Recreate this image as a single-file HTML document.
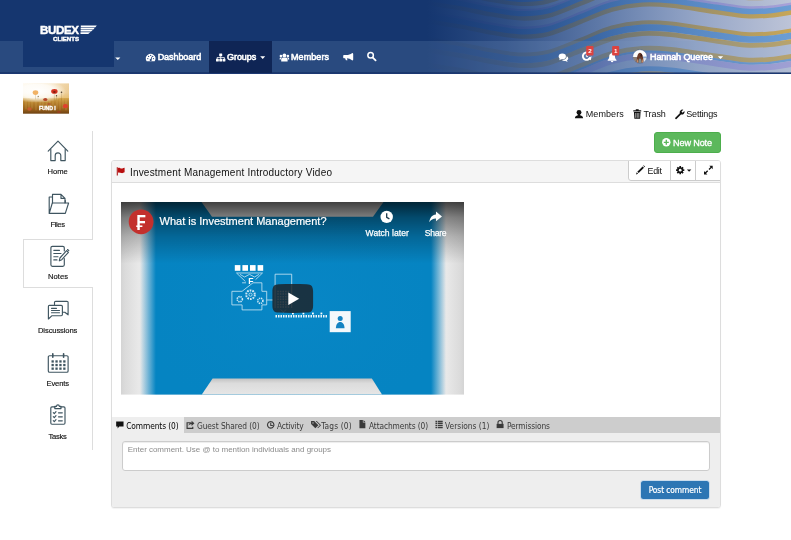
<!DOCTYPE html>
<html lang="en">
<head>
<meta charset="utf-8">
<title>Investment Management Introductory Video</title>
<style>
*{box-sizing:border-box;margin:0;padding:0}
html,body{width:791px;height:540px;overflow:hidden;background:#fff}
body{font-family:"Liberation Sans",sans-serif;color:#111;position:relative;font-size:9px}
#hdr{position:absolute;left:0;top:0;width:791px;height:74px;background:#15366f;overflow:hidden}
#hdr svg.bg{position:absolute;left:0;top:0}
#navband{position:absolute;left:0;top:41px;width:791px;height:32px;background:rgba(126,154,196,.2)}
#hdrline{position:absolute;left:0;top:72px;width:791px;height:2px;background:linear-gradient(rgba(15,40,92,.5) 0,rgba(15,40,92,.5) 50%,#1c3872 50%,#1c3872 100%)}
#logo{position:absolute;left:23px;top:0;width:91px;height:67px;background:#15366f}
#navact{position:absolute;left:209px;top:41px;width:63px;height:32px;background:#0f2555}
#wrap{position:absolute;left:0;top:0;width:791px;height:540px;will-change:transform}
.t{position:absolute;white-space:nowrap;display:block}
.ic{position:absolute;display:block;overflow:visible}
.box{position:absolute;display:block}
</style>
</head>
<body>
<div id="wrap">
<div id="hdr">
  <svg class="bg" width="791" height="75" viewBox="0 0 791 75">
    <defs>
      <path id="wv" fill="none" d="M395,6C401.0,7.7 420.0,13.5 431,16C442.0,18.5 451.0,19.2 461,21C471.0,22.8 481.0,25.3 491,27C501.0,28.7 511.5,30.8 521,31C530.5,31.2 538.0,31.0 548,28.5C558.0,26.0 570.3,20.1 581,16C591.7,11.9 601.8,6.8 612,4C622.2,1.2 632.2,-0.3 642,-1C651.8,-1.7 658.7,-1.2 671,0C683.3,1.2 703.7,4.8 716,6.5C728.3,8.2 736.0,9.9 745,10.5C754.0,11.1 760.8,10.8 770,10C779.2,9.2 795.0,6.2 800,5.5"/>
      <filter id="wb" x="0" y="0" width="100%" height="100%" filterUnits="userSpaceOnUse"><feGaussianBlur stdDeviation=".55"/></filter>
      <linearGradient id="fade" gradientUnits="userSpaceOnUse" x1="0" x2="791" y1="0" y2="0">
        <stop offset="0" stop-color="#15366f"/>
        <stop offset="0.54" stop-color="#15366f"/>
        <stop offset="0.64" stop-color="#173b77" stop-opacity=".87"/>
        <stop offset="0.76" stop-color="#1b4486" stop-opacity=".6"/>
        <stop offset="0.88" stop-color="#234f96" stop-opacity=".3"/>
        <stop offset="1" stop-color="#234f96" stop-opacity=".05"/>
      </linearGradient>
    </defs>
    <rect x="380" width="411" height="75" fill="#c5cadb"/>
    <g filter="url(#wb)">
<use href="#wv" y="-71" stroke="#d0ab55" stroke-width="3.5"/>
<use href="#wv" y="-67" stroke="#70a2d8" stroke-width="6"/>
<use href="#wv" y="-52" stroke="#70a2d8" stroke-width="6"/>
<use href="#wv" y="-48" stroke="#d0ab55" stroke-width="4"/>
<use href="#wv" y="-36" stroke="#d0ab55" stroke-width="4"/>
<use href="#wv" y="-31.5" stroke="#70a2d8" stroke-width="6"/>
<use href="#wv" y="-27" stroke="#d0ab55" stroke-width="4"/>
<use href="#wv" y="-21" stroke="#b0a6dc" stroke-width="2"/>
<use href="#wv" y="-17" stroke="#70a2d8" stroke-width="6"/>
<use href="#wv" y="-12.6" stroke="#d0ab55" stroke-width="4.4"/>
<use href="#wv" y="-3" stroke="#b0a6dc" stroke-width="3"/>
<use href="#wv" y="1.2" stroke="#70a2d8" stroke-width="6.4"/>
<use href="#wv" y="5.6" stroke="#d0ab55" stroke-width="4.4"/>
<use href="#wv" y="23.6" stroke="#d0ab55" stroke-width="4.2"/>
<use href="#wv" y="28.8" stroke="#70a2d8" stroke-width="6.6"/>
<use href="#wv" y="34.6" stroke="#d0ab55" stroke-width="4.8"/>
<use href="#wv" y="49.5" stroke="#d0ab55" stroke-width="5"/>
<use href="#wv" y="52.8" stroke="#70a2d8" stroke-width="2.2"/>
<use href="#wv" y="57" stroke="#b0a6dc" stroke-width="6"/>
<use href="#wv" y="70" stroke="#70a2d8" stroke-width="5"/>
<use href="#wv" y="74" stroke="#d0ab55" stroke-width="3"/>
<use href="#wv" y="88" stroke="#d0ab55" stroke-width="3"/>
<use href="#wv" y="92" stroke="#70a2d8" stroke-width="6"/>
    </g>
    <rect width="791" height="75" fill="url(#fade)"/>
  </svg>
  <div id="navband"></div>
  <div id="hdrline"></div>
  <div id="logo"></div>
  <div id="navact"></div>
<svg class="ic" style="left:0;top:0" width="791" height="75" viewBox="0 0 791 75">
  <!-- logo wing -->
  <g fill="#fff">
    <polygon points="80.800,25.500 96.800,25.500 95.400,27.200 80.800,27.200"/>
    <polygon points="80.700,27.800 94.800,27.800 93.300,29.400 80.700,29.400"/>
    <polygon points="80.600,30 92.700,30 91,31.600 80.600,31.600"/>
    <polygon points="80.500,32.200 90.300,32.200 88.200,33.900 80.500,33.900"/>
  </g>
  <!-- caret by logo -->
  <polygon points="115.200,57.400 120.400,57.400 117.800,60.100" fill="#fff"/>
  <!-- dashboard (tachometer) -->
  <g>
    <path d="M146.6,61.2 A4.75,4.75 0 1 1 154.7,61.2 Z" fill="#fff"/>
    <g fill="#2a4a80">
      <circle cx="147.8" cy="58.6" r=".65"/><circle cx="148.6" cy="56.4" r=".65"/><circle cx="150.65" cy="55.4" r=".65"/><circle cx="152.7" cy="56.4" r=".65"/><circle cx="153.5" cy="58.6" r=".65"/>
      <path d="M150.1,60.6 L151.6,56.6 L152.2,56.9 L151.2,60.9 Z"/>
      <circle cx="150.65" cy="60.1" r="1"/>
    </g>
  </g>
  <!-- groups (sitemap) -->
  <g fill="#fff">
    <rect x="219.2" y="53.6" width="3" height="2.6" rx=".3"/>
    <rect x="216" y="58.8" width="2.8" height="2.6" rx=".3"/>
    <rect x="219.3" y="58.8" width="2.8" height="2.6" rx=".3"/>
    <rect x="222.6" y="58.8" width="2.8" height="2.6" rx=".3"/>
    <path d="M220.4,56 h.7 v1.2 h3.6 v1.8 h-.7 v-1.1 h-2.9 v1.1 h-.7 v-1.1 h-2.9 v1.1 h-.7 v-1.8 h3.6 z"/>
  </g>
  <!-- caret groups -->
  <polygon points="260.200,56.300 265.200,56.300 262.700,58.900" fill="#fff"/>
  <!-- members (users) -->
  <g fill="#fff">
    <circle cx="284.4" cy="55.4" r="1.9"/>
    <path d="M281.2,61.4 v-2 a1.9,1.9 0 0 1 1.9,-1.9 h2.6 a1.9,1.9 0 0 1 1.9,1.9 v2 z"/>
    <circle cx="280.9" cy="56" r="1.3"/>
    <path d="M279.6,59.6 v-.9 a1.3,1.3 0 0 1 1.3,-1.2 h1 a2.6,2.6 0 0 0 -1.2,2.1 z"/>
    <circle cx="287.9" cy="56" r="1.3"/>
    <path d="M289.2,59.6 v-.9 a1.3,1.3 0 0 0 -1.3,-1.2 h-1 a2.6,2.6 0 0 1 1.2,2.1 z"/>
  </g>
  <!-- megaphone -->
  <g fill="#fff">
    <path d="M352.3,53 c.5,0 .9,.4 .9,.9 v5.6 c0,.5 -.4,.9 -.9,.9 c-2,-1.5 -3.6,-2.1 -5.4,-2.2 l.6,2.1 h-1.6 l-.8,-2.1 h-.9 c-.6,0 -1,-.4 -1,-1 v-1.1 c0,-.6 .4,-1 1,-1 h2.2 c2.1,0 3.900,-.6 5.900,-2.100 z"/>
  </g>
  <!-- search -->
  <g fill="none" stroke="#fff">
    <circle cx="370.6" cy="55.3" r="2.75" stroke-width="1.5"/>
    <path d="M372.8,57.6 L375.6,60.4" stroke-width="1.8" stroke-linecap="round"/>
  </g>
  <!-- comments -->
  <g fill="#fff">
    <ellipse cx="562.300" cy="56.400" rx="3.600" ry="2.800"/>
    <path d="M559.900,58 L559.300,60.300 L562.200,58.800 Z"/>
    <path d="M566.700,56.200 a3,2.500 0 0 1 .2,4.300 l.8,1.400 l-2.200,-.9 a3.400,2.500 0 0 1 -3.600,-1 a4.500,3.600 0 0 0 4.800,-3.800 z"/>
  </g>
  <!-- history -->
  <g fill="none" stroke="#fff">
    <path d="M588.600,53.100 A3.700,3.700 0 1 0 590.100,57.300" stroke-width="1.900"/>
    <path d="M591.600,56.300 L590.800,60.200 L587.600,58.400 Z" fill="#fff" stroke="none"/>
    <path d="M586.400,54.600 V56.600 H588" stroke-width=".9"/>
  </g>
  <rect x="586.200" y="46" width="7.300" height="9.500" rx="1" fill="#dc4340"/>
  <!-- bell -->
  <g fill="#fff">
    <path d="M612.100,53.300 c2.100,0 2.900,1.600 2.900,3.400 c0,1.500 .5,2.400 1.500,3.200 v.8 h-8.800 v-.8 c1,-.8 1.500,-1.700 1.500,-3.200 c0,-1.800 .8,-3.400 2.900,-3.400 z"/>
    <circle cx="612.100" cy="53.200" r=".7"/>
    <path d="M610.900,61.100 h2.400 a1.200,1.200 0 0 1 -2.400,0 z"/>
  </g>
  <rect x="612.100" y="46" width="7.100" height="9.500" rx="1" fill="#dc4340"/>
  <!-- avatar -->
  <clipPath id="avc"><ellipse cx="639.900" cy="56.500" rx="7.100" ry="6.800"/></clipPath>
  <g clip-path="url(#avc)">
    <rect x="632" y="49" width="16" height="16" fill="#fdfdfd"/>
    <rect x="632" y="57" width="6" height="8" fill="#8d8078"/>
    <rect x="642" y="56.500" width="6" height="2" fill="#8fb0d8"/>
    <rect x="642" y="58.500" width="6" height="6" fill="#dfe6ee"/>
    <path d="M636.800,64 c-.4,-4 .2,-10.800 3,-11.200 c3,.2 4,6.500 3.600,11.200 z" fill="#6b3b2a"/>
    <path d="M638.300,64 c0,-3.500 .4,-5.500 1.600,-5.500 c1.300,0 1.800,2 1.800,5.500 z" fill="#7f8e92"/>
    <path d="M636.600,64 c.1,-2.500 .5,-4.500 1.400,-5.200 l.3,5.200 z M643.300,64 c-.1,-2.500 -.5,-4.500 -1.400,-5.200 l-.3,5.200 z" fill="#c98c66"/>
    <ellipse cx="641.300" cy="55.200" rx=".9" ry="1.500" fill="#3a1f1a"/>
  </g>
  <ellipse cx="639.900" cy="56.500" rx="7.100" ry="6.800" fill="none" stroke="#2c4f8f" stroke-width=".6" opacity=".6"/>
  <!-- caret user -->
  <polygon points="717.800,56.200 723.200,56.200 720.500,59" fill="#fff"/>
</svg>

<span class="t" style="left:39.9px;top:22.08px;font-size:11.6px;line-height:16px;color:#fff;letter-spacing:-0.373px;font-weight:bold;-webkit-text-stroke:.45px #fff;">BUDEX</span>
<span class="t" style="left:53.1px;top:33.69px;font-size:6.1px;line-height:9px;color:#fff;letter-spacing:-0.030px;font-weight:bold;-webkit-text-stroke:.4px #fff;">CLIENTS</span>
<span class="t" style="left:157.7px;top:50.98px;font-size:9.0px;line-height:13px;color:#fff;letter-spacing:-0.066px;-webkit-text-stroke:.55px #fff;">Dashboard</span>
<span class="t" style="left:227.1px;top:50.98px;font-size:9.0px;line-height:13px;color:#fff;letter-spacing:-0.083px;-webkit-text-stroke:.55px #fff;">Groups</span>
<span class="t" style="left:291.0px;top:50.98px;font-size:9.0px;line-height:13px;color:#fff;letter-spacing:0.081px;-webkit-text-stroke:.55px #fff;">Members</span>
<span class="t" style="left:650.0px;top:50.88px;font-size:9.0px;line-height:13px;color:#fff;letter-spacing:-0.087px;-webkit-text-stroke:.55px #fff;">Hannah Queree</span>
<span class="t" style="left:588.3px;top:46.25px;font-size:6.2px;line-height:9px;color:#fff;letter-spacing:0.047px;font-weight:bold;">2</span>
<span class="t" style="left:613.9px;top:46.25px;font-size:6.2px;line-height:9px;color:#fff;letter-spacing:-0.253px;font-weight:bold;">1</span>
</div>
<!-- fund thumbnail -->
<svg class="ic" style="left:23px;top:83px" width="46" height="30.800" viewBox="0 -0.400 46 30.800">
  <defs>
    <linearGradient id="th1" x1="0" x2="0" y1="0" y2="1">
      <stop offset="0" stop-color="#fdf6e6"/><stop offset=".3" stop-color="#fbedd0"/><stop offset=".47" stop-color="#f1d79a"/><stop offset=".5" stop-color="#cfa046"/><stop offset=".62" stop-color="#b98430"/><stop offset=".85" stop-color="#9a621c"/><stop offset="1" stop-color="#6e4212"/>
    </linearGradient>
    <radialGradient id="th2" cx=".32" cy=".42" r=".62"><stop offset="0" stop-color="#fff" stop-opacity="1"/><stop offset=".6" stop-color="#fff" stop-opacity=".8"/><stop offset="1" stop-color="#fff" stop-opacity="0"/></radialGradient>
    <linearGradient id="th3" x1="0" x2="1" y1="0" y2="0"><stop offset="0" stop-color="#e8b860" stop-opacity=".0"/><stop offset="1" stop-color="#d9a24a" stop-opacity=".45"/></linearGradient>
  </defs>
  <rect width="46" height="30.300" fill="url(#th1)"/>
  <rect width="46" height="15" fill="url(#th3)"/>
  <rect width="46" height="19" fill="url(#th2)"/>
  <g stroke="#6e5424" stroke-width=".4" opacity=".45"><path d="M31.400,9 V17 M38.500,9 V17 M12.500,11 V16 M33.500,12 V17 M15,13.500 V16"/></g>
  <g stroke="#e9c777" stroke-width=".5" opacity=".55"><path d="M3,16 V26 M6,15 V27 M9,16 V25 M13,15 V27 M17,16 V26 M20,15 V24 M24,15.500 V27 M27,15 V25 M30,16 V27 M34,15 V26 M37,16 V27 M40,15 V25 M43,16 V27"/></g>
  <ellipse cx="12.500" cy="9.200" rx="2.800" ry="2.300" fill="#f1b265"/>
  <ellipse cx="31.400" cy="8" rx="3.200" ry="2.400" fill="#d3321f"/>
  <ellipse cx="31.400" cy="8.600" rx="1.300" ry=".9" fill="#7a1c12"/>
  <circle cx="38.500" cy="8.800" r=".8" fill="#4a3a2a"/><circle cx="33.500" cy="12.300" r=".7" fill="#5a4630"/><circle cx="15.200" cy="13" r=".6" fill="#8a7040"/>
  <ellipse cx="22.300" cy="16.100" rx="2.100" ry="1.600" fill="#b5452a"/>
  <ellipse cx="42.400" cy="22.800" rx="2.500" ry="2.100" fill="#e0402c"/>
  <ellipse cx="6.500" cy="25.600" rx="2.300" ry="1.800" fill="#cf5a34" opacity=".8"/>
  <ellipse cx="26" cy="20.500" rx="1.800" ry="1" fill="#b84a2c" opacity=".7"/>
  <ellipse cx="36" cy="28.500" rx="2" ry="1" fill="#a63a22" opacity=".7"/>
</svg>

<!-- sidebar borders -->
<div class="box" style="left:92px;top:131px;width:1px;height:108px;background:#ddd"></div>
<div class="box" style="left:92px;top:287px;width:1px;height:163px;background:#ddd"></div>
<div class="box" style="left:23px;top:238.500px;width:70px;height:49.500px;border:1px solid #ddd;border-right:0"></div>

<!-- top-right actions / buttons -->
<div class="box" style="left:654px;top:132.300px;width:67.200px;height:20.800px;background:#5cb85c;border:1px solid #4cae4c;border-radius:3px"></div>

<!-- panel -->
<div class="box" style="left:111px;top:160px;width:610px;height:347.500px;border:1px solid #ddd;border-radius:3px;box-shadow:0 1px 1px rgba(0,0,0,.05);overflow:hidden;background:#fff">
  <div class="box" style="left:0;top:0;width:608px;height:21.500px;background:#f5f5f5;border-bottom:1px solid #ddd"></div>
  <div class="box" style="left:516px;top:-1px;width:93px;height:21.300px;background:#fff;border:1px solid #ccc;border-radius:0 0 0 3px"></div>
  <div class="box" style="left:558px;top:0;width:1px;height:20px;background:#ccc"></div>
  <div class="box" style="left:583px;top:0;width:1px;height:20px;background:#ccc"></div>
  <div class="box" style="left:0;top:255.600px;width:608px;height:16.400px;background:#cdcdcd"></div>
  <div class="box" style="left:0;top:255.600px;width:71.500px;height:17px;background:#eee"></div>
  <div class="box" style="left:0;top:272px;width:608px;height:76px;background:#eee"></div>
  <div class="box" style="left:10.400px;top:280.300px;width:588px;height:29.600px;background:#fff;border:1px solid #ccc;border-radius:3px;box-shadow:inset 0 1px 1px rgba(0,0,0,.075)"></div>
  <div class="box" style="left:527.700px;top:318.500px;width:70.800px;height:20.700px;background:#2d76b4;border:1px solid rgba(255,255,255,.75);border-radius:3.500px"></div>
</div>

<!-- video -->
<svg class="ic" style="left:121px;top:201.700px" width="343" height="192.600" viewBox="0 0 343 192.600">
  <defs>
    <linearGradient id="vroom" x1="0" x2="1" y1="0" y2="0">
      <stop offset="0" stop-color="#d4d4d4"/><stop offset=".012" stop-color="#dbdbdb"/><stop offset=".05" stop-color="#e8e8e8"/><stop offset=".09" stop-color="#e9e9ec"/>
      <stop offset=".91" stop-color="#e9e9ec"/><stop offset=".95" stop-color="#e8e8e8"/><stop offset=".988" stop-color="#dbdbdb"/><stop offset="1" stop-color="#d4d4d4"/>
    </linearGradient>
    <linearGradient id="vblue" x1="0" x2="1" y1="0" y2="0">
      <stop offset="0" stop-color="#0584c2" stop-opacity="0"/><stop offset=".026" stop-color="#0584c2" stop-opacity=".5"/><stop offset=".052" stop-color="#0584c2" stop-opacity="1"/>
      <stop offset=".951" stop-color="#0584c2" stop-opacity="1"/><stop offset=".976" stop-color="#0584c2" stop-opacity=".5"/><stop offset="1" stop-color="#0584c2" stop-opacity="0"/>
    </linearGradient>
    <linearGradient id="vdark" x1="0" x2="0" y1="0" y2="1">
      <stop offset="0" stop-color="#000" stop-opacity=".72"/><stop offset=".08" stop-color="#000" stop-opacity=".44"/>
      <stop offset=".18" stop-color="#000" stop-opacity=".22"/><stop offset=".32" stop-color="#000" stop-opacity="0"/>
    </linearGradient>
    <linearGradient id="vbot" x1="0" x2="0" y1="0" y2="1"><stop offset="0" stop-color="#c2c2c2"/><stop offset=".3" stop-color="#dcdcdc"/><stop offset="1" stop-color="#e6e6e6"/></linearGradient>
    <radialGradient id="vglow" cx=".5" cy=".55" r=".6"><stop offset="0" stop-color="#0c8bcc" stop-opacity=".4"/><stop offset="1" stop-color="#0a84c4" stop-opacity="0"/></radialGradient>
  </defs>
  <rect width="343" height="192.600" fill="url(#vroom)"/>
  <rect x="19" width="306" height="192.600" fill="url(#vblue)"/>
  <rect x="40" width="263" height="192.600" fill="url(#vglow)"/>
  <polygon points="80.500,0 262.500,0 252,14.800 91,14.800" fill="#e2e2e2"/>
  <polygon points="91.600,176.600 250.900,176.600 261,192.600 80.800,192.600" fill="url(#vbot)"/>
  <rect width="343" height="192.600" fill="url(#vdark)"/>
  <!-- centre artwork -->
  <g fill="#fff">
    <rect x="113.800" y="63.100" width="5.600" height="5.700"/><rect x="121.400" y="63.100" width="5.600" height="5.700"/><rect x="129" y="63.100" width="5.600" height="5.700"/><rect x="136.600" y="63.100" width="5.600" height="5.700"/>
  </g>
  <g fill="none" stroke="#d9edf8" stroke-width=".8" opacity=".95">
    <path d="M115.500,71 L124.400,79.500 M141.500,71 L134.600,77.600 M115.500,71 H141.500 M119,72.400 L123.500,75 L128.500,72.400 L133.500,75 L138,72.400"/>
    <path d="M121.100,80.800 H125 M132,80.800 H140.900 V89.300 H145.700 V102.900 H140.900 V107.900 H121.100 V102.900 H110.900 V89.300 H121.100 Z"/>
    <circle cx="129.500" cy="92.700" r="4.300" stroke-width="2" stroke-dasharray="1.700 1"/><circle cx="129.500" cy="92.700" r="1.600"/>
    <circle cx="118.800" cy="97.200" r="2.600" stroke-width="1.600" stroke-dasharray="1.300 .8"/>
    <circle cx="139.300" cy="98.800" r="2.600" stroke-width="1.600" stroke-dasharray="1.300 .8"/>
    <path d="M145.700,98 H152"/>
    <path d="M154.100,106 V72.200 H170.700 V106"/>
  </g>
  <text x="127.200" y="82.400" font-family="Liberation Sans, sans-serif" font-weight="bold" font-size="8.600" fill="#fff">F</text>
  <path d="M154.500,114.300 H206" stroke="#fff" stroke-width="2.600" stroke-dasharray="1.500 1" fill="none" opacity=".92"/>
  <g fill="#fff"><rect x="171" y="110.600" width="1.800" height="1.800"/><rect x="181.500" y="110.600" width="1.800" height="1.800"/><rect x="191" y="110.600" width="1.800" height="1.800"/><rect x="199.500" y="110.600" width="1.800" height="1.800"/></g>
  <rect x="208.700" y="109.100" width="21" height="21.100" fill="#f4f8fb"/>
  <g fill="#1583c2"><circle cx="219.200" cy="116.400" r="2.500"/><path d="M214.900,126.300 c0,-4 1.800,-6.300 4.300,-6.300 c2.500,0 4.300,2.300 4.300,6.300 z"/></g>
  <g stroke="#d6ecf8" stroke-width="1.500" stroke-dasharray="1.500 1.100" opacity=".8"><path d="M156.300,89.500 H169 M156.300,92.100 H169 M156.300,94.700 H169 M156.300,97.300 H169 M156.300,99.900 H169 M156.300,102.500 H169 M156.300,105.100 H169"/></g>
  <path d="M159.500,107.500 L162.400,110 L165.300,107.500" stroke="#cfe6f5" stroke-width=".7" fill="none"/>
  <!-- play button -->
  <path d="M151.400,90 c0,-5.500 1.500,-7.500 6.500,-7.700 c9,-.5 18.700,-.5 27.700,0 c5,.2 6.500,2.200 6.500,7.700 v12.900 c0,5.500 -1.500,7.500 -6.500,7.700 c-9,.5 -18.700,.5 -27.700,0 c-5,-.2 -6.500,-2.200 -6.500,-7.700 z" fill="#1d242a" opacity=".84"/>
  <polygon points="167.300,90.400 178.200,96.650 167.300,102.900" fill="#fff"/>
  <!-- channel logo -->
  <circle cx="20.100" cy="19.800" r="12.400" fill="#c3302d"/>
  <text transform="translate(15.300 28.100) scale(.8 1)" font-family="Liberation Sans, sans-serif" font-weight="bold" font-size="21.200" fill="#fff">₣</text>
  <!-- watch later -->
  <circle cx="265.700" cy="14.900" r="6.200" fill="#fff"/>
  <path d="M265.700,11.200 V15.300 L268.400,16.900" stroke="#1c3a4d" stroke-width="1.300" fill="none"/>
  <!-- share -->
  <path d="M321,14.400 L315,9.600 V12.400 C311,12.800 308.800,15.600 308.300,20.200 C310,17.600 312,16.500 315,16.400 V19.200 Z" fill="#fff"/>
</svg>

<!-- icons overlay -->
<svg class="ic" style="left:0;top:0" width="791" height="540" viewBox="0 0 791 540">
  <!-- sidebar icons -->
  <g fill="none" stroke="#3f5560" stroke-width="1.150" stroke-linejoin="round" stroke-linecap="round">
    <!-- home -->
    <path d="M48.200,151.200 L58,141.200 L67.800,151.200"/>
    <path d="M50.800,149.200 V160.600 H55.200 V155.600 A2.800,2.800 0 0 1 60.800,155.600 V160.600 H65.200 V149.200"/>
    <!-- files -->
    <path d="M52.500,203 V194.400 H61 L65,198.400 V203 M61,194.400 V198.400 H65"/>
    <path d="M50.500,213.400 H49.200 V197 H52.500 M49.200,213.400 H65.300 L68.600,203 H52.300 L49.400,212.800 M65.300,203 V200.500"/>
    <!-- notes -->
    <path d="M64.300,258.500 V264.800 A1.500,1.500 0 0 1 62.800,266.300 H52.400 A1.500,1.500 0 0 1 50.900,264.800 V247.800 A1.500,1.500 0 0 1 52.400,246.300 H62.800 A1.500,1.500 0 0 1 64.300,247.800 V251"/>
    <path d="M53.800,250.300 H59.500 M53.800,253.500 H61 M53.800,256.700 H58 M53.800,259.900 H57"/>
    <path d="M59.300,260.800 L59.900,258 L66.600,250.600 L68.400,252.300 L61.800,259.700 Z M67.600,249.500 L68.800,250.600" />
    <!-- discussions -->
    <path d="M54.500,304.500 V302.500 A1.200,1.200 0 0 1 55.700,301.300 H66.900 A1.200,1.200 0 0 1 68.100,302.500 V314.800 L64.800,312.200 H63"/>
    <path d="M49.500,305.300 H61.200 A1.200,1.200 0 0 1 62.400,306.500 V314.500 A1.200,1.200 0 0 1 61.200,315.700 H52 L48.400,319 V306.500 A1.200,1.200 0 0 1 49.500,305.300 Z"/>
    <path d="M51.500,308.300 H56.500 M51.500,310.500 H59.500 M51.500,312.700 H59.500"/>
    <!-- events -->
    <path d="M49.600,355.700 H66.800 A1.300,1.300 0 0 1 68.100,357 V370.900 A1.300,1.300 0 0 1 66.800,372.200 H49.600 A1.300,1.300 0 0 1 48.300,370.900 V357 A1.300,1.300 0 0 1 49.600,355.700 Z"/>
    <path d="M52.800,353.800 V357.300 M63.600,353.800 V357.300" stroke-width="1.600"/>
    <!-- tasks -->
    <path d="M55,406.800 H52 A1.200,1.200 0 0 0 50.800,408 V423 A1.200,1.200 0 0 0 52,424.200 H63.800 A1.200,1.200 0 0 0 65,423 V408 A1.200,1.200 0 0 0 63.800,406.800 H60.800"/>
    <path d="M54.800,408.600 V406.300 H56.500 A1.400,1.400 0 0 1 59.300,406.300 H61 V408.600 Z"/>
    <path d="M53.300,412.600 L54.300,413.600 L56,411.600 M53.300,416.600 L54.300,417.600 L56,415.600 M53.300,420.600 L54.300,421.600 L56,419.600 M58.500,412.800 H62.300 M58.500,416.800 H62.300 M58.500,420.800 H62.300"/>
  </g>
  <g fill="#3f5560">
    <rect x="51.500" y="360.300" width="2.300" height="2.300"/><rect x="55.400" y="360.300" width="2.300" height="2.300"/><rect x="59.300" y="360.300" width="2.300" height="2.300"/><rect x="63.200" y="360.300" width="2.300" height="2.300"/>
    <rect x="51.500" y="363.900" width="2.300" height="2.300"/><rect x="55.400" y="363.900" width="2.300" height="2.300"/><rect x="59.300" y="363.900" width="2.300" height="2.300"/><rect x="63.200" y="363.900" width="2.300" height="2.300"/>
    <rect x="51.500" y="367.500" width="2.300" height="2.300"/><rect x="55.400" y="367.500" width="2.300" height="2.300"/><rect x="59.300" y="367.500" width="2.300" height="2.300"/><rect x="63.200" y="367.500" width="2.300" height="2.300"/>
  </g>

  <!-- members / trash / settings -->
  <g fill="#111">
    <circle cx="579" cy="112.400" r="2.450"/>
    <path d="M574.900,118.300 c0,-1.900 1.100,-2.500 2.900,-3.100 c.3,-.5 .3,-.9 .1,-1.300 h2.200 c-.2,.4 -.2,.8 .1,1.300 c1.800,.6 2.900,1.200 2.900,3.100 z"/>
    <!-- trash -->
    <path d="M635.800,109.300 h2.900 v.9 h2.500 v1.200 h-7.900 v-1.200 h2.500 z"/>
    <path d="M633.900,112.100 h6.700 l-.5,6.600 h-5.700 z"/>
    <!-- wrench -->
    <path d="M675.300,117.700 L679.800,113.200 A2.700,2.700 0 0 1 683.300,109.800 L681.500,111.600 L682.600,112.700 L684.400,110.900 A2.700,2.700 0 0 1 681,114.400 L676.500,118.900 A.85,.85 0 0 1 675.300,117.700 Z"/>
  </g>
  <g stroke="#fff" stroke-width=".6"><path d="M635.700,113 V117.800 M637.250,113 V117.800 M638.800,113 V117.800"/></g>

  <!-- new note plus -->
  <circle cx="666.300" cy="142.300" r="4.200" fill="#fff"/>
  <path d="M663.800,142.300 H668.800 M666.300,139.800 V144.800" stroke="#5cb85c" stroke-width="1.350"/>

  <!-- flag -->
  <path d="M117.300,167.300 V175.500" stroke="#b01818" stroke-width="1.100"/>
  <path d="M118,167.900 C119.500,167.100 120.800,168.900 122.300,168.400 C123.200,168.100 124,167.600 124.600,167.700 V172.300 C123.500,172.600 122.800,173.300 121.500,173.100 C120.200,172.900 119.200,172.100 118,172.700 Z" fill="#b80f0f"/>

  <!-- pencil -->
  <path d="M636,174.400 L636.700,172.300 L638.100,173.700 Z M637.300,171.700 L642.600,166.400 L644,167.800 L638.700,173.100 Z M643.200,165.800 L643.700,165.300 L645.100,166.700 L644.600,167.200 Z" fill="#111"/>
  <!-- cog -->
  <g transform="translate(680.200 170.200)">
    <circle r="2.900" fill="#111"/>
    <g stroke="#111" stroke-width="1.700"><path d="M0,-4.100 V4.100 M-4.100,0 H4.100 M-2.900,-2.900 L2.900,2.900 M-2.900,2.900 L2.900,-2.900"/></g>
    <circle r="1.350" fill="#fff"/>
  </g>
  <polygon points="686.900,169.500 691.300,169.500 689.100,171.700" fill="#111"/>
  <!-- expand -->
  <g fill="#111">
    <polygon points="712.700,165.800 712.700,169.200 709.300,165.800"/><polygon points="704,174.400 704,171 707.400,174.400"/>
  </g>
  <path d="M711.600,166.900 L709,169.500 M705.100,173.300 L707.700,170.700" stroke="#111" stroke-width="1.300"/>

  <!-- tab icons -->
  <g fill="#111"><g transform="translate(119.85 425.00) scale(1.1) translate(-119.85 -425.00)"><path d="M116.500,421.800 h6.700 v4.600 h-3.900 l-1.500,1.700 v-1.700 h-1.300 z"/></g></g>
  <g fill="#3a3a3a">
<g transform="translate(190.40 425.00) scale(1.18) translate(-190.30 -425.00)"><path d="M190.600,422.600 h-3.600 v5.800 h5.800 v-2 h-1 v1 h-3.800 v-3.800 h2.600 z"/><path d="M193.700,423.600 L191.300,421.400 V422.800 C189.600,422.900 188.800,424 188.700,425.700 C189.400,424.700 190.200,424.400 191.300,424.400 V425.800 Z"/></g>
<g transform="translate(270.70 424.90) scale(1.15) translate(-270.40 -425.10)"><path d="M270.400,421.800 a3.300,3.300 0 1 0 .001,0 z m0,1 a2.300,2.300 0 1 1 -.001,0 z"/><path d="M270,423.300 h.9 v1.800 h1.400 v.9 h-2.300 z"/></g>
<g transform="translate(316.00 424.60) scale(1.15) translate(-315.60 -425.00)"><path d="M311.300,421.800 h2.700 l3.700,3.700 l-2.700,2.700 l-3.700,-3.700 z"/><path d="M315.300,421.800 h1 l3.700,3.700 l-2.700,2.700 l-.5,-.5 l2.200,-2.200 z"/><circle cx="313" cy="423.500" r=".6" fill="#cdcdcd"/></g>
<g transform="translate(362.40 424.10) scale(1.14) translate(-362.20 -425.00)"><path d="M359.600,421.500 h3 v2.200 h2.200 v4.900 h-5.200 z M363.200,421.500 l1.600,1.600 h-1.600 z"/></g>
<g transform="translate(439.10 424.50) scale(1.1) translate(-439.00 -425.30)"><path d="M435.700,421.900 h1.700 v1.300 h-1.700 z m2.300,0 h4.300 v1.300 h-4.300 z M435.700,423.800 h1.700 v1.300 h-1.700 z m2.300,0 h4.300 v1.300 h-4.300 z M435.700,425.700 h1.700 v1.300 h-1.700 z m2.300,0 h4.300 v1.300 h-4.300 z M435.700,427.600 h1.700 v1.100 h-1.700 z m2.300,0 h4.300 v1.100 h-4.300 z"/></g>
<g transform="translate(500.10 424.30) scale(1.12) translate(-500.40 -425.20)"><path d="M497.300,424.800 h6.200 v3.800 h-6.200 z"/><path d="M498.500,425 v-1.300 a1.900,1.900 0 0 1 3.800,0 v1.300" fill="none" stroke="#3a3a3a" stroke-width="1"/></g>
  </g>
</svg>

<span class="t" style="left:38.9px;top:105.00px;font-size:5.2px;line-height:7px;color:#fff;letter-spacing:-0.099px;font-weight:bold;-webkit-text-stroke:.3px #fff;">FUND I</span>
<span class="t" style="left:585.8px;top:107.88px;font-size:9.0px;line-height:13px;color:#111;letter-spacing:0.064px;">Members</span>
<span class="t" style="left:643.5px;top:107.88px;font-size:9.0px;line-height:13px;color:#111;letter-spacing:-0.093px;">Trash</span>
<span class="t" style="left:686.3px;top:107.88px;font-size:9.0px;line-height:13px;color:#111;letter-spacing:-0.190px;">Settings</span>
<span class="t" style="left:673.1px;top:136.95px;font-size:9.1px;line-height:13px;color:#fff;letter-spacing:-0.148px;-webkit-text-stroke:.3px #fff;">New Note</span>
<span class="t" style="left:129.9px;top:165.63px;font-size:10.0px;line-height:14px;color:#111;letter-spacing:0.212px;">Investment Management Introductory Video</span>
<span class="t" style="left:647.6px;top:164.72px;font-size:8.9px;line-height:12px;color:#111;letter-spacing:-0.299px;">Edit</span>
<span class="t" style="left:159.5px;top:213.59px;font-size:11px;line-height:15px;color:#fff;letter-spacing:0.003px;-webkit-text-stroke:.2px #fff;">What is Investment Management?</span>
<span class="t" style="left:365.6px;top:227.42px;font-size:8.6px;line-height:12px;color:#fff;letter-spacing:0.006px;-webkit-text-stroke:.25px #fff;">Watch later</span>
<span class="t" style="left:424.7px;top:227.42px;font-size:8.6px;line-height:12px;color:#fff;letter-spacing:-0.259px;-webkit-text-stroke:.25px #fff;">Share</span>
<span class="t" style="left:47.5px;top:165.77px;font-size:7.6px;line-height:11px;color:#111;letter-spacing:0.011px;-webkit-text-stroke:.15px #111;">Home</span>
<span class="t" style="left:50.5px;top:218.67px;font-size:7.6px;line-height:11px;color:#111;letter-spacing:-0.387px;-webkit-text-stroke:.15px #111;">Files</span>
<span class="t" style="left:48.0px;top:271.27px;font-size:7.6px;line-height:11px;color:#111;letter-spacing:0.039px;-webkit-text-stroke:.15px #111;">Notes</span>
<span class="t" style="left:38.0px;top:324.87px;font-size:7.6px;line-height:11px;color:#111;letter-spacing:-0.112px;-webkit-text-stroke:.15px #111;">Discussions</span>
<span class="t" style="left:46.5px;top:377.87px;font-size:7.6px;line-height:11px;color:#111;letter-spacing:-0.144px;-webkit-text-stroke:.15px #111;">Events</span>
<span class="t" style="left:48.5px;top:430.57px;font-size:7.6px;line-height:11px;color:#111;letter-spacing:-0.280px;-webkit-text-stroke:.15px #111;">Tasks</span>
<span class="t" style="left:126.2px;top:419.83px;font-size:8.3px;line-height:12px;color:#000;letter-spacing:-0.084px;font-family:'DejaVu Sans Condensed','DejaVu Sans',sans-serif;">Comments (0)</span>
<span class="t" style="left:196.9px;top:419.83px;font-size:8.3px;line-height:12px;color:#3a3a3a;letter-spacing:-0.048px;font-family:'DejaVu Sans Condensed','DejaVu Sans',sans-serif;">Guest Shared (0)</span>
<span class="t" style="left:277.0px;top:419.83px;font-size:8.3px;line-height:12px;color:#3a3a3a;letter-spacing:-0.172px;font-family:'DejaVu Sans Condensed','DejaVu Sans',sans-serif;">Activity</span>
<span class="t" style="left:321.2px;top:419.83px;font-size:8.3px;line-height:12px;color:#3a3a3a;letter-spacing:0.165px;font-family:'DejaVu Sans Condensed','DejaVu Sans',sans-serif;">Tags (0)</span>
<span class="t" style="left:369.0px;top:419.83px;font-size:8.3px;line-height:12px;color:#3a3a3a;letter-spacing:-0.106px;font-family:'DejaVu Sans Condensed','DejaVu Sans',sans-serif;">Attachments (0)</span>
<span class="t" style="left:445.1px;top:419.83px;font-size:8.3px;line-height:12px;color:#3a3a3a;letter-spacing:0.007px;font-family:'DejaVu Sans Condensed','DejaVu Sans',sans-serif;">Versions (1)</span>
<span class="t" style="left:507.0px;top:419.83px;font-size:8.3px;line-height:12px;color:#3a3a3a;letter-spacing:-0.121px;font-family:'DejaVu Sans Condensed','DejaVu Sans',sans-serif;">Permissions</span>
<span class="t" style="left:127.8px;top:444.33px;font-size:8.0px;line-height:11px;color:#8c8c8c;letter-spacing:-0.028px;">Enter comment. Use @ to mention individuals and groups</span>
<span class="t" style="left:648.7px;top:483.93px;font-size:8.3px;line-height:12px;color:#fff;letter-spacing:-0.066px;font-family:'DejaVu Sans Condensed','DejaVu Sans',sans-serif;-webkit-text-stroke:.2px #fff;">Post comment</span>
</div>
</body>
</html>
